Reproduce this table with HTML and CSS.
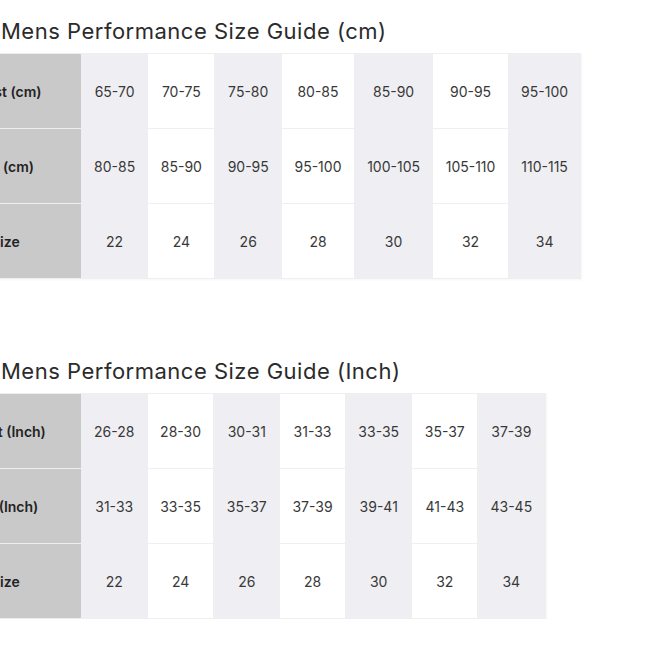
FILE: index.html
```html
<!DOCTYPE html>
<html>
<head>
<meta charset="utf-8">
<link rel="stylesheet" href="styles.css">
</head>
<body>
<div class="page">
  <section class="guide">
    <h2 class="title">Mens Performance Size Guide (cm)</h2>
    <table class="size-table">
      <tr>
        <th>Waist (cm)</th>
        <td>65-70</td><td>70-75</td><td>75-80</td><td>80-85</td><td>85-90</td><td>90-95</td><td>95-100</td>
      </tr>
      <tr>
        <th>Hip (cm)</th>
        <td>80-85</td><td>85-90</td><td>90-95</td><td>95-100</td><td>100-105</td><td>105-110</td><td>110-115</td>
      </tr>
      <tr>
        <th>Size</th>
        <td>22</td><td>24</td><td>26</td><td>28</td><td>30</td><td>32</td><td>34</td>
      </tr>
    </table>
  </section>
  <section class="guide second">
    <h2 class="title">Mens Performance Size Guide (Inch)</h2>
    <table class="size-table inch">
      <tr>
        <th>Waist (Inch)</th>
        <td>26-28</td><td>28-30</td><td>30-31</td><td>31-33</td><td>33-35</td><td>35-37</td><td>37-39</td>
      </tr>
      <tr>
        <th>Hip (Inch)</th>
        <td>31-33</td><td>33-35</td><td>35-37</td><td>37-39</td><td>39-41</td><td>41-43</td><td>43-45</td>
      </tr>
      <tr>
        <th>Size</th>
        <td>22</td><td>24</td><td>26</td><td>28</td><td>30</td><td>32</td><td>34</td>
      </tr>
    </table>
  </section>
</div>
</body>
</html>
```
FILE: styles.css
```css
html, body {
  margin: 0;
  padding: 0;
  background: #ffffff;
}
body {
  font-family: Inter, "Open Sans", sans-serif;
  color: #333333;
}
.page {
  padding-top: 15px;
}
.guide {
  display: flex;
  flex-direction: column;
  align-items: flex-start;
}
.second {
  margin-top: 76px;
}
.title {
  margin: 0 0 6px 1px;
  font-size: 22px;
  font-weight: 400;
  line-height: 32px;
  color: #2b2b2b;
  letter-spacing: 0.5px;
}
.size-table {
  border-collapse: collapse;
  margin-left: -71px;
  box-shadow: 1px 1px 2px rgba(0,0,0,0.04);
}
.size-table th,
.size-table td {
  height: 74px;
  padding: 0 12.35px;
  border: 1px solid #efeff2;
  text-align: center;
  font-size: 14px;
  white-space: nowrap;
}
.size-table th {
  width: 126px;
  background: #c9c9c9;
  font-weight: 600;
  color: #222222;
}
.size-table td {
  font-weight: 400;
  color: #383838;
}
.size-table td:nth-child(even) {
  background: #efeff3;
}
.size-table td:nth-child(odd) {
  background: #ffffff;
}
```
